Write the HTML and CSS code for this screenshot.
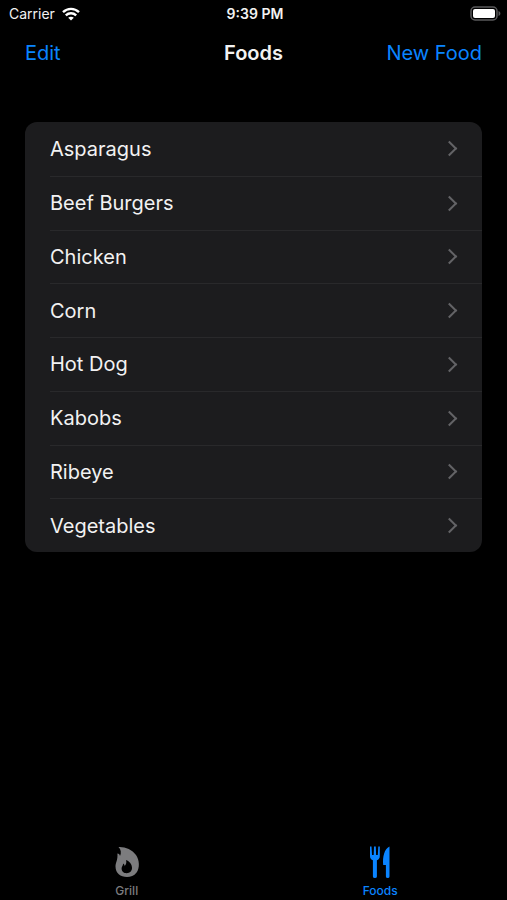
FILE: index.html
```html
<!DOCTYPE html>
<html lang="en">
<head>
    <meta charset="UTF-8">
    <meta name="viewport" content="width=device-width, initial-scale=1">
    <title>Foods</title>
    <link rel="stylesheet" href="styles.css">
</head>
<body>
    <div class="status">
        <div class="carrier">
            <span>Carrier</span>
            <svg width="18" height="14" viewBox="0 0 18 14" fill="none" stroke="#fff" stroke-width="2.4">
                <path d="M1 5.2C5.6.8 12.4.8 17 5.2"/>
                <path d="M3.8 8.4C6.8 5.6 11.2 5.6 14.2 8.4"/>
                <path d="M9 13.6L6.2 10.8C7.8 9.3 10.2 9.3 11.8 10.8Z" fill="#fff" stroke="none"/>
            </svg>
        </div>
        <span class="time">9:39 PM</span>
        <svg class="battery" width="31" height="15" viewBox="0 0 31 15">
            <rect x="1" y="1" width="26" height="13" rx="4" fill="none" stroke="#59595b" stroke-width="1.5"/>
            <rect x="3" y="3" width="22" height="9" rx="2" fill="#fff"/>
            <path d="M28.5 5C31 6 31 9 28.5 10Z" fill="#59595b"/>
        </svg>
    </div>

    <header class="navbar">
        <button type="button">Edit</button>
        <h1>Foods</h1>
        <button type="button">New Food</button>
    </header>

    <main>
        <ul class="foods">
            <li><a href="#asparagus">Asparagus</a></li>
            <li><a href="#beef-burgers">Beef Burgers</a></li>
            <li><a href="#chicken">Chicken</a></li>
            <li><a href="#corn">Corn</a></li>
            <li><a href="#hot-dog">Hot Dog</a></li>
            <li><a href="#kabobs">Kabobs</a></li>
            <li><a href="#ribeye">Ribeye</a></li>
            <li><a href="#vegetables">Vegetables</a></li>
        </ul>
    </main>

    <nav class="tabs">
        <a href="#grill">
            <svg width="26" height="32" viewBox="0 0 26 32" fill="currentColor" fill-rule="evenodd">
                <path d="M4.500 1C11 .6 18 3.500 22 9C25.500 14 26 22 22.600 26.500C20 30 16.500 31 13 31C6.500 31 1.500 27 1.500 20.500C1.500 16.500 4 14 3.400 7.500C5 7.600 5.800 8.500 6 10C7.500 7 7 3.500 4.500 1ZM12 14C13 17.500 11.500 18.500 10.800 20.200C10.500 19 10 18 9 17.500C9.400 19.500 7.600 20.300 7.600 22.500C7.600 25.500 9.800 27.200 12.600 27.200C16 27.200 18 25 18 21.800C18 18 15 15 12 14Z"/>
            </svg>
            <span>Grill</span>
        </a>
        <a href="#foods" class="active">
            <svg width="26" height="32" viewBox="0 0 26 32" fill="currentColor">
                <path d="M3 .5H4.500L5 9H6.700L7 .5H8.800L9.100 9H10.800L11.300 .5H12.800V10C12.800 12.500 11.500 13.600 9.900 14.300V30.500Q9.900 32 7.900 32Q5.900 32 5.900 30.500V14.300C4.200 13.600 3 12.500 3 10Z"/>
                <path d="M22.500.5V30.500Q22.500 32 20.700 32Q18.900 32 18.900 30.500V19H16.200C15.500 11 17.200 3 22.500.5Z"/>
            </svg>
            <span>Foods</span>
        </a>
    </nav>
</body>
</html>
```

FILE: styles.css
```css
*, *::after{
    margin: 0;
    padding: 0;
    box-sizing: border-box;
}
body{
    min-height: 100vh;
    display: flex;
    flex-direction: column;
    background: #000;
    color: #f2f2f2;
    font-family: Inter, "Liberation Sans", sans-serif;
    font-size: 20px;
    line-height: 26px;
}
a{
    color: inherit;
    text-decoration: none;
}

/* status bar */
.status{
    display: grid;
    grid-template-columns: 1fr auto 1fr;
    align-items: center;
    height: 27px;
    padding: 0 6px 0 9px;
    font-size: 14px;
}
.carrier{
    display: flex;
    align-items: center;
    gap: 7px;
}
.time{
    font-weight: 600;
}
.battery{
    justify-self: end;
}

/* navigation bar */
.navbar{
    display: grid;
    grid-template-columns: 1fr auto 1fr;
    align-items: center;
    height: 52px;
    padding: 0 25px;
}
.navbar h1{
    font-size: 20px;
    font-weight: 600;
}
.navbar button{
    justify-self: start;
    border: none;
    background: none;
    color: #0a84ff;
    font: inherit;
    cursor: pointer;
}
.navbar button:last-child{
    justify-self: end;
}

/* food list */
main{
    flex: 1;
    padding: 43px 25px;
}
.foods{
    display: grid;
    grid-auto-rows: 1fr;
    min-height: 430px;
    padding-left: 25px;
    border-radius: 12px;
    background: #1c1c1e;
    list-style: none;
}
.foods li{
    display: grid;
}
.foods li + li{
    border-top: 1px solid #29292b;
}
.foods a{
    display: flex;
    align-items: center;
    justify-content: space-between;
    padding-right: 27px;
}
.foods a::after{
    content: "";
    width: 11px;
    height: 11px;
    border-top: 2px solid #636366;
    border-right: 2px solid #636366;
    transform: rotate(45deg);
}

/* tab bar */
.tabs{
    display: flex;
    color: #7c7c7e;
    font-size: 12px;
    font-weight: 500;
    line-height: 14px;
}
.tabs a{
    flex: 1;
    display: flex;
    flex-direction: column;
    align-items: center;
    gap: 6px;
    padding-bottom: 2px;
}
.tabs .active{
    color: #0a84ff;
}
```
